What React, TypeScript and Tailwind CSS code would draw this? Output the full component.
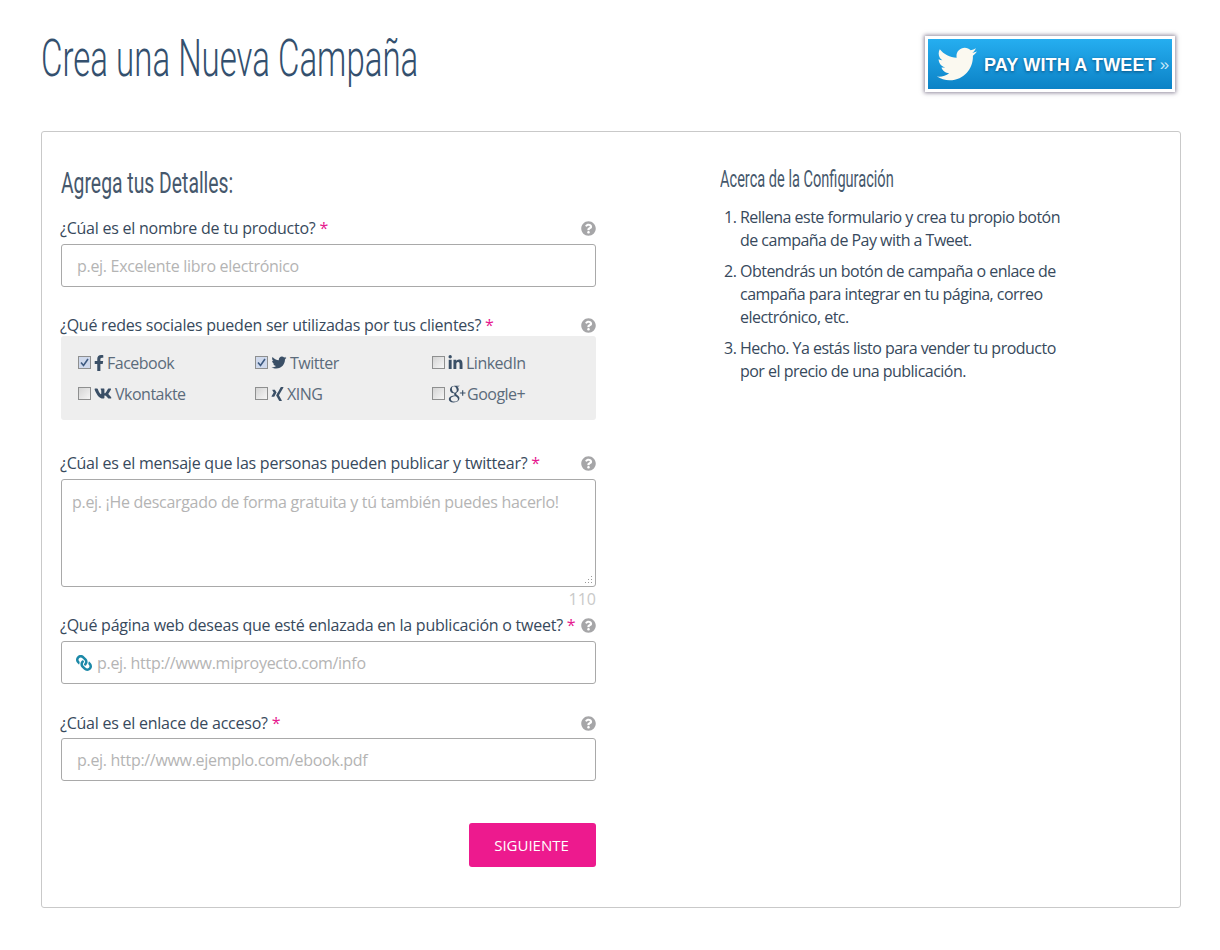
import { FaFacebookF, FaTwitter, FaLinkedinIn, FaVk, FaXing, FaQuestionCircle, FaLink } from 'react-icons/fa';
import { TiSocialGooglePlus } from 'react-icons/ti';
import type { ReactNode } from 'react';

const networks = [
  { name: 'Facebook', icon: <FaFacebookF className="w-[10px] h-[16px]" />, checked: true },
  { name: 'Twitter', icon: <FaTwitter className="w-[16px] h-[15px]" />, checked: true },
  { name: 'LinkedIn', icon: <FaLinkedinIn className="w-[15px] h-[16px]" />, checked: false },
  { name: 'Vkontakte', icon: <FaVk className="w-[18px] h-[17px]" />, checked: false },
  { name: 'XING', icon: <FaXing className="w-[13px] h-[16px]" />, checked: false },
  { name: 'Google+', icon: <TiSocialGooglePlus className="w-[27px] h-[27px] -ml-[5px] -mr-[6px] -my-[4px]" />, checked: false },
];

const steps = [
  'Rellena este formulario y crea tu propio botón de campaña de Pay with a Tweet.',
  'Obtendrás un botón de campaña o enlace de campaña para integrar en tu página, correo electrónico, etc.',
  'Hecho. Ya estás listo para vender tu producto por el precio de una publicación.',
];

function Label({ children }: { children: ReactNode }) {
  return (
    <div className="flex items-center justify-between h-[20px] -ml-px text-[16px] tracking-[-0.24px] text-[#37495c]">
      <span className="whitespace-nowrap">
        {children} <span className="text-[#e6168e]">*</span>
      </span>
      <FaQuestionCircle className="w-[15px] h-[15px] text-[#a6a6a8] shrink-0" />
    </div>
  );
}

function Check({ checked }: { checked: boolean }) {
  return (
    <span className="w-[13px] h-[13px] border border-[#8e8f8f] bg-gradient-to-br from-[#d4d4d4] to-[#f6f6f6] flex items-center justify-center shrink-0">
      {checked && (
        <svg viewBox="0 0 11 11" className="w-[11px] h-[11px] bg-[#cfd9ec]">
          <path d="M2 5.5 L4.5 8.5 L9 2" fill="none" stroke="#3d5a80" strokeWidth="1.6" />
        </svg>
      )}
    </span>
  );
}

export default function App() {
  return (
    <div className="min-h-screen bg-white pl-[41px] pr-[39px] font-['Open_Sans',sans-serif] text-[#37495c]">
      <header className="flex items-start justify-between h-[131px] pr-[6px]">
        <h1 className="mt-[29px] font-['Roboto',sans-serif] font-light text-[52px] leading-[60px] text-[#34506e] whitespace-nowrap origin-left scale-x-[0.635]">
          Crea una Nueva Campaña
        </h1>
        <div className="mt-[36px] w-[250px] h-[56px] border-[3px] border-white shadow-[0_0_4px_1px_rgba(70,60,90,0.6)] bg-gradient-to-b from-[#25aef0] to-[#0b82c6] flex items-center pl-[9px]">
          <FaTwitter className="w-[40px] h-[40px] text-[#fbf9f0]" />
          <span className="ml-[7px] pt-[2px] font-['Liberation_Sans',sans-serif] font-bold text-[18px] tracking-[0.15px] text-white whitespace-nowrap [text-shadow:0_1px_3px_rgba(0,50,90,0.7)]">
            PAY WITH A TWEET
          </span>
          <span className="ml-[4px] pt-[2px] font-['Liberation_Sans',sans-serif] text-[17px] text-[#c8e8f8]">»</span>
        </div>
      </header>

      <main className="border border-[#c9c9c9] rounded-[3px] h-[777px] pl-[19px] flex">
        <section className="w-[535px] shrink-0">
          <h2 className="mt-[32px] mb-[16px] font-['Roboto',sans-serif] font-normal text-[30px] leading-[38px] text-[#46586c] whitespace-nowrap origin-left scale-x-[0.645]">
            Agrega tus Detalles:
          </h2>

          <Label>¿Cúal es el nombre de tu producto?</Label>
          <input
            placeholder="p.ej. Excelente libro electrónico"
            className="mt-[6px] block w-full h-[43px] border border-[#a9a9a9] rounded-[3px] px-[15px] text-[16px] tracking-[-0.3px] placeholder:text-[#b4b4b4]"
          />

          <div className="mt-[28px]">
            <Label>¿Qué redes sociales pueden ser utilizadas por tus clientes?</Label>
          </div>
          <div className="mt-[1px] h-[84px] bg-[#eeeeee] rounded-[3px] pl-[17px] pt-[11px] grid grid-cols-[177px_177px_1fr] auto-rows-[31px]">
            {networks.map((n) => (
              <div key={n.name} className="flex items-center gap-[3px] text-[16px] tracking-[-0.5px] text-[#5b6b7b]">
                <Check checked={n.checked} />
                <span className="text-[#3a4f66] flex items-center">{n.icon}</span>
                <span>{n.name}</span>
              </div>
            ))}
          </div>

          <div className="mt-[33px]">
            <Label>¿Cúal es el mensaje que las personas pueden publicar y twittear?</Label>
          </div>
          <div className="relative mt-[6px]">
            <textarea
              placeholder="p.ej. ¡He descargado de forma gratuita y tú también puedes hacerlo!"
              className="block w-full h-[108px] resize-none border border-[#a9a9a9] rounded-[3px] px-[10px] py-[10px] text-[16px] tracking-[-0.3px] placeholder:text-[#b4b4b4]"
            />
            <svg viewBox="0 0 8 8" className="absolute right-[3px] bottom-[3px] w-[8px] h-[8px] text-[#9a9a9a]">
              <path d="M6 0h1v1H6zM3 3h1v1H3zM6 3h1v1H6zM0 6h1v1H0zM3 6h1v1H3zM6 6h1v1H6z" fill="currentColor" />
            </svg>
          </div>
          <div className="h-[28px] text-right text-[16px] leading-[24px] text-[#c9c9c9]">110</div>

          <Label>¿Qué página web deseas que esté enlazada en la publicación o tweet?</Label>
          <div className="mt-[6px] h-[43px] border border-[#a9a9a9] rounded-[3px] pl-[14px] flex items-center">
            <FaLink className="w-[16px] h-[16px] text-[#1c89a8] shrink-0 -scale-x-100" />
            <input
              placeholder="p.ej. http://www.miproyecto.com/info"
              className="ml-[5px] flex-1 outline-none text-[16px] tracking-[-0.3px] placeholder:text-[#b4b4b4]"
            />
          </div>

          <div className="mt-[29px]">
            <Label>¿Cúal es el enlace de acceso?</Label>
          </div>
          <input
            placeholder="p.ej. http://www.ejemplo.com/ebook.pdf"
            className="mt-[5px] block w-full h-[43px] border border-[#a9a9a9] rounded-[3px] px-[15px] text-[16px] tracking-[-0.3px] placeholder:text-[#b4b4b4]"
          />

          <div className="mt-[42px] flex justify-end">
            <button className="w-[127px] h-[44px] pr-[2px] bg-[#ed1a8e] rounded-[3px] text-white text-[15px]">SIGUIENTE</button>
          </div>
        </section>

        <aside className="ml-[124px] w-[345px] pt-[32px]">
          <h3 className="font-['Roboto',sans-serif] text-[23.5px] leading-[30px] text-[#46586c] whitespace-nowrap origin-left scale-x-[0.62]">
            Acerca de la Configuración
          </h3>
          <ol className="mt-[12px] list-decimal pl-[20px] text-[16px] leading-[23px] tracking-[-0.52px] text-[#37495c] flex flex-col gap-[8px]">
            {steps.map((s) => (
              <li key={s}>{s}</li>
            ))}
          </ol>
        </aside>
      </main>
    </div>
  );
}
